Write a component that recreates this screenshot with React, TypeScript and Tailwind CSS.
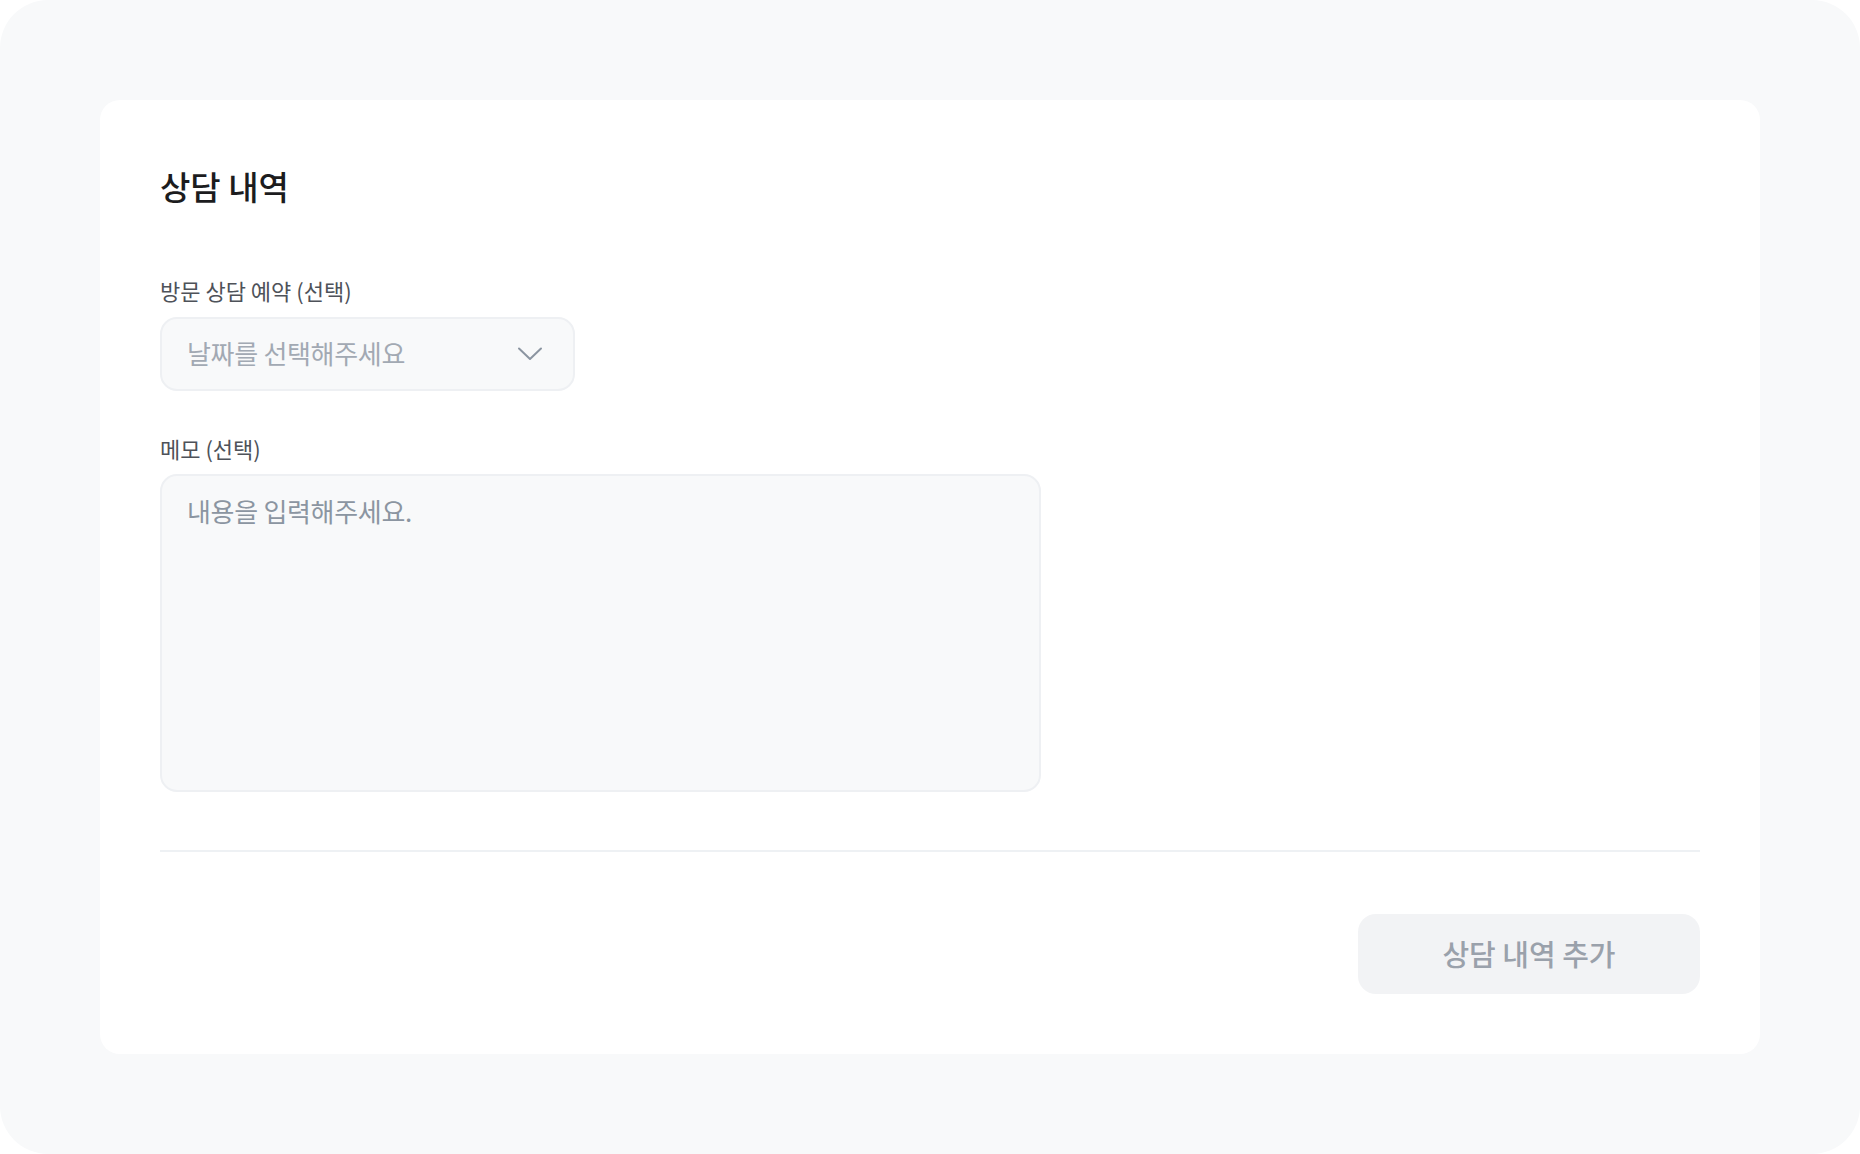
import React, { useState } from 'react';

const ChevronDown: React.FC = () => (
  <svg width="26" height="16" viewBox="0 0 26 16" fill="none" className="shrink-0">
    <path d="M2 2.5L13 13L24 2.5" stroke="#8b95a1" strokeWidth="2" strokeLinecap="round" strokeLinejoin="round" />
  </svg>
);

const App: React.FC = () => {
  const [memo, setMemo] = useState('');

  return (
    <div
      className="w-[1860px] h-[1154px] bg-[#f8f9fa] rounded-[48px] p-[100px]"
      style={{ fontFamily: '"Noto Sans CJK KR", "Noto Sans", sans-serif' }}
    >
      <div className="h-full bg-white rounded-[20px] px-[60px] pt-[60px] pb-[60px] flex flex-col">
        <h2 className="text-[33px] leading-[52px] font-medium text-[#1c1c1e]">상담 내역</h2>

        <div className="mt-[63px] flex flex-col gap-[12px]">
          <label className="text-[22px] leading-[30px] text-[#4e5259]">방문 상담 예약 (선택)</label>
          <button className="w-[415px] h-[74px] bg-[#f8f9fa] border-2 border-[#eef0f3] rounded-[17px] pl-[25px] pr-[30px] flex items-center justify-between">
            <span className="text-[26px] leading-[36px] text-[#a2a9b3] tracking-[-0.3px] -mt-[2px]">날짜를 선택해주세요</span>
            <ChevronDown />
          </button>
        </div>

        <div className="mt-[42px] flex flex-col gap-[11px]">
          <label className="text-[22px] leading-[30px] text-[#4e5259]">메모 (선택)</label>
          <textarea
            value={memo}
            onChange={(e) => setMemo(e.target.value)}
            placeholder="내용을 입력해주세요."
            className="w-[881px] h-[318px] bg-[#f8f9fa] border-2 border-[#eef0f3] rounded-[17px] px-[25px] pt-[16px] text-[26px] leading-[38px] tracking-[-0.3px] text-[#333] placeholder:text-[#8b95a1] outline-none resize-none"
          />
        </div>

        <div className="mt-[58px] h-[2px] bg-[#eef1f4]" />

        <div className="mt-[62px] flex justify-end">
          <button className="w-[342px] h-[80px] bg-[#f2f3f5] rounded-[18px] text-[29px] font-medium text-[#9aa1ab]">
            상담 내역 추가
          </button>
        </div>
      </div>
    </div>
  );
};

export default App;
